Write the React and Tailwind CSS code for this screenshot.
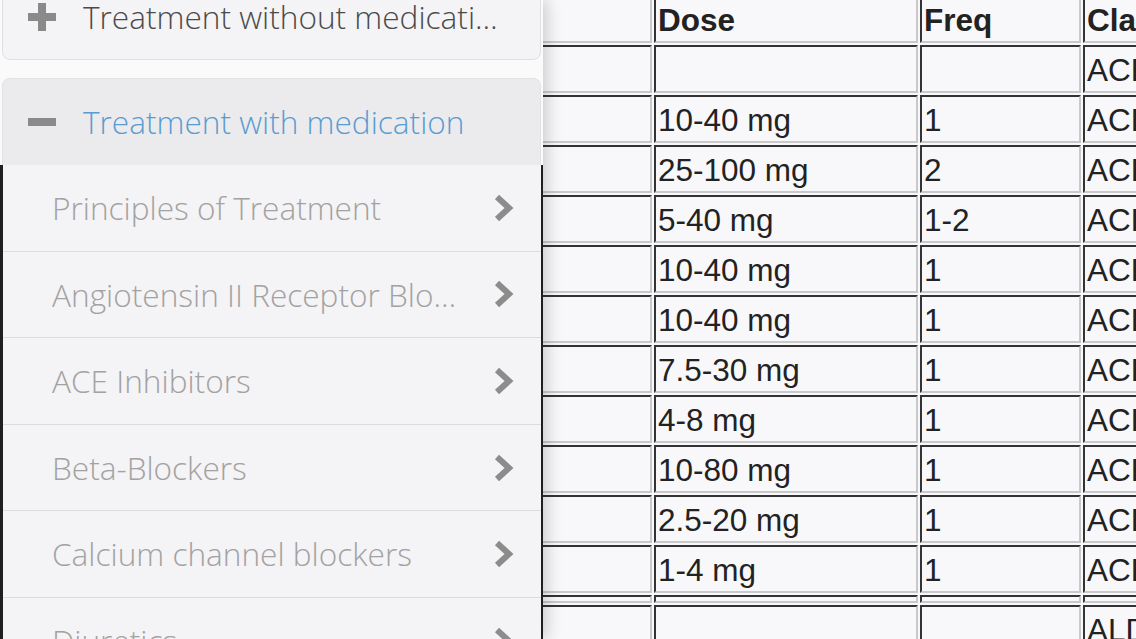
import React from "react";

const cellBase =
  "border-2 border-t-[#333333] border-l-[#333333] border-b-[#c9c9c9] border-r-[#c9c9c9] flex items-center pl-[2px] pt-[4px] whitespace-nowrap overflow-hidden";

const rows = [
  ["", "", "ACE inhibitors"],
  ["10-40 mg", "1", "ACE inhibitor"],
  ["25-100 mg", "2", "ACE inhibitor"],
  ["5-40 mg", "1-2", "ACE inhibitor"],
  ["10-40 mg", "1", "ACE inhibitor"],
  ["10-40 mg", "1", "ACE inhibitor"],
  ["7.5-30 mg", "1", "ACE inhibitor"],
  ["4-8 mg", "1", "ACE inhibitor"],
  ["10-80 mg", "1", "ACE inhibitor"],
  ["2.5-20 mg", "1", "ACE inhibitor"],
  ["1-4 mg", "1", "ACE inhibitor"],
];

function Chevron() {
  return (
    <svg width="22" height="30" viewBox="0 0 22 30" className="shrink-0">
      <polyline
        points="4,4 16,15 4,26"
        fill="none"
        stroke="#8c8c8c"
        strokeWidth="6"
        strokeLinejoin="miter"
      />
    </svg>
  );
}

function Plus() {
  return (
    <svg width="28" height="28" viewBox="0 0 28 28" className="shrink-0">
      <rect x="10" y="0" width="8" height="28" fill="#8a8a8a" />
      <rect x="0" y="10" width="28" height="8" fill="#8a8a8a" />
    </svg>
  );
}

function Minus() {
  return (
    <svg width="28" height="8" viewBox="0 0 28 8" className="shrink-0">
      <rect x="0" y="0" width="28" height="8" fill="#8a8a8a" />
    </svg>
  );
}

const items = [
  "Principles of Treatment",
  "Angiotensin II Receptor Blockers",
  "ACE Inhibitors",
  "Beta-Blockers",
  "Calcium channel blockers",
  "Diuretics",
];

export default function App() {
  return (
    <div
      className="relative w-[1136px] h-[639px] overflow-hidden bg-[#f8f7f9]"
      style={{ fontFamily: "'Liberation Sans', Arial, sans-serif" }}
    >
      {/* Table */}
      <div className="ml-[302px] mt-[-5px] w-max grid grid-cols-[350px_264px_161px_420px] gap-[2px] text-[31.5px] text-[#222222] leading-none">
        <div className={`${cellBase} h-[48px]`}></div>
        <div className={`${cellBase} h-[48px] font-bold`}>Dose</div>
        <div className={`${cellBase} h-[48px] font-bold`}>Freq</div>
        <div className={`${cellBase} h-[48px] font-bold`}>Class</div>
        {rows.map((r, i) => (
          <React.Fragment key={i}>
            <div className={`${cellBase} h-[48px]`}></div>
            <div className={`${cellBase} h-[48px]`}>{r[0]}</div>
            <div className={`${cellBase} h-[48px]`}>{r[1]}</div>
            <div className={`${cellBase} h-[48px]`}>{r[2]}</div>
          </React.Fragment>
        ))}
        <div className={`${cellBase} h-[8px] pt-0`}></div>
        <div className={`${cellBase} h-[8px] pt-0`}></div>
        <div className={`${cellBase} h-[8px] pt-0`}></div>
        <div className={`${cellBase} h-[8px] pt-0`}></div>
        <div className={`${cellBase} h-[48px]`}></div>
        <div className={`${cellBase} h-[48px]`}></div>
        <div className={`${cellBase} h-[48px]`}></div>
        <div className={`${cellBase} h-[48px]`}>ALDOSTERONE ANTAGONISTS</div>
      </div>

      {/* Side panel (drawer over content) */}
      <div
        className="absolute left-0 top-0 w-[543px] h-[639px] flex flex-col bg-[#fafafb] shadow-[5px_0_14px_rgba(0,0,0,0.16)]"
        style={{ fontFamily: "'Open Sans', 'Noto Sans', sans-serif" }}
      >
        <div className="mx-[2px] mt-[-27px] h-[87px] shrink-0 flex items-center bg-[#f4f3f5] border border-[#e0dfe2] rounded-b-[8px] pl-[25px]">
          <Plus />
          <span className="ml-[27px] w-[420px] truncate text-[31.6px] font-light text-[#4a4a4a]">
            Treatment without medication
          </span>
        </div>
        <div className="mx-[2px] mt-[18px] h-[87px] shrink-0 flex items-center bg-[#ebebed] border border-b-0 border-[#e2e1e4] rounded-t-[8px] pl-[25px]">
          <Minus />
          <span className="ml-[27px] text-[31.6px] font-light text-[#5a9cd2] whitespace-nowrap">
            Treatment with medication
          </span>
        </div>
        <div className="flex-1 flex flex-col bg-[#f4f3f5] border-l-[3px] border-r-2 border-[#1f1f1f]">
          {items.map((t) => (
            <div
              key={t}
              className="h-[86.6px] shrink-0 flex items-center border-b border-[#dcdbde] pl-[49px] pr-[26px]"
            >
              <span className="w-[410px] truncate text-[31.6px] font-light text-[#a2a2a2]">
                {t}
              </span>
              <span className="ml-auto">
                <Chevron />
              </span>
            </div>
          ))}
        </div>
      </div>
    </div>
  );
}
